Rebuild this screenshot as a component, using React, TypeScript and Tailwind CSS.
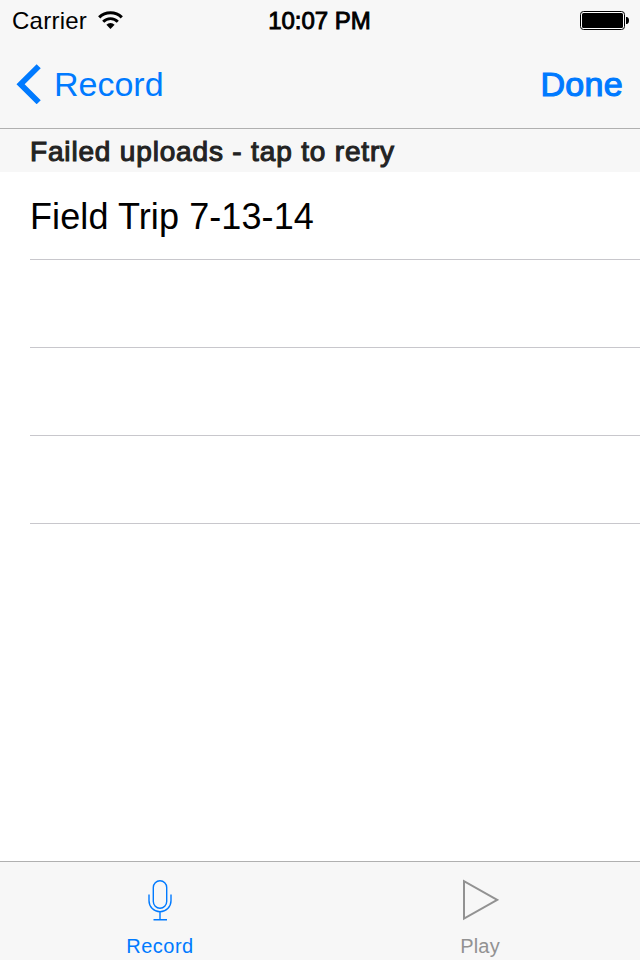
const rows = ['Field Trip 7-13-14', '', '', ''];

function StatusBar() {
  return (
    <div className="flex h-10 items-center justify-between pr-[11px] pl-3 text-[24px] leading-none text-black">
      <div className="flex w-[200px] items-center gap-[11px]">
        <span className="w-[75px] pt-0.5 tracking-[0.25px] whitespace-nowrap">Carrier</span>
        <svg width="26" height="18" viewBox="0 0 26 18" fill="none" stroke="#000">
          <path d="M1.2 6.4A16.1 16.1 0 0 1 23.8 6.4" strokeWidth="3.1" />
          <path d="M5.2 10.7A10.1 10.1 0 0 1 19.8 10.7" strokeWidth="2.9" />
          <path d="M12.5 18L8.4 13.8A5.8 5.8 0 0 1 16.6 13.8Z" fill="#000" stroke="none" />
        </svg>
      </div>
      <span className="-ml-0.5 pt-0.5 whitespace-nowrap [-webkit-text-stroke:0.9px_#000]">10:07 PM</span>
      <div className="flex w-[200px] justify-end">
        <svg width="49" height="19" viewBox="0 0 49 19">
          <rect x="0.5" y="0.5" width="44" height="18" rx="3" fill="#fff" stroke="#000" />
          <rect x="2" y="2" width="41" height="15" rx="1.5" />
          <path d="M46 6H47C48.4 6.4 49 7.8 49 9.5S48.4 12.6 47 13H46Z" />
        </svg>
      </div>
    </div>
  );
}

function NavBar() {
  return (
    <div className="flex h-[88px] items-center justify-between pr-[17px] pl-4 text-[34px] leading-none text-[#007aff]">
      <button className="flex items-center gap-[13px]">
        <svg width="25" height="40" viewBox="0 0 25 40" fill="none" stroke="currentColor" strokeWidth="5.8">
          <path d="M22.7 2.2L4.6 20.2L22.7 38.2" />
        </svg>
        <span>Record</span>
      </button>
      <button className="tracking-[0.3px] [-webkit-text-stroke:1.2px_#007aff]">Done</button>
    </div>
  );
}

export default function App() {
  return (
    <div className="flex h-[960px] w-[640px] flex-col overflow-hidden bg-white font-['Liberation_Sans',Arial,sans-serif]">
      <header className="h-[129px] shrink-0 border-b border-[#b0b0b0] bg-[#f7f7f7]">
        <StatusBar />
        <NavBar />
      </header>
      <main className="flex-1">
        <h2 className="flex h-[43px] items-center bg-[#f7f7f7] pt-[3px] pl-[30px] text-[28px] leading-none tracking-[0.83px] text-[#232323] [-webkit-text-stroke:1.1px_#232323]">
          Failed uploads - tap to retry
        </h2>
        <ul className="pl-[30px]">
          {rows.map((row, i) => (
            <li key={i} className="flex h-[88px] items-center border-b border-[#c8c7cc] pt-0.5 text-[36px] leading-none tracking-[0.1px] text-black">
              {row}
            </li>
          ))}
        </ul>
      </main>
      <nav className="flex h-[99px] shrink-0 border-t border-[#b0b0b0] bg-[#f7f7f7] text-[20px] leading-none">
        <button className="flex flex-1 flex-col items-center pt-[17px] text-[#007aff]">
          <svg width="26" height="42" viewBox="0 0 26 42" fill="none" stroke="currentColor" strokeWidth="1.4">
            <rect x="6.3" y="1.7" width="13.4" height="27.6" rx="6.7" />
            <path d="M2 15.5V21.8A11 11 0 0 0 24 21.8V15.5M13 32.8V40.7M6.5 40.7H20" />
          </svg>
          <span className="mt-[15px] tracking-[0.5px]">Record</span>
        </button>
        <button className="flex flex-1 flex-col items-center pt-[17px] text-[#929292]">
          <svg width="38" height="42" viewBox="0 0 38 42" fill="none" stroke="currentColor" strokeWidth="2">
            <path d="M3 2.2V39.6L36.2 20.9Z" />
          </svg>
          <span className="mt-[15px] tracking-[0.2px]">Play</span>
        </button>
      </nav>
    </div>
  );
}
